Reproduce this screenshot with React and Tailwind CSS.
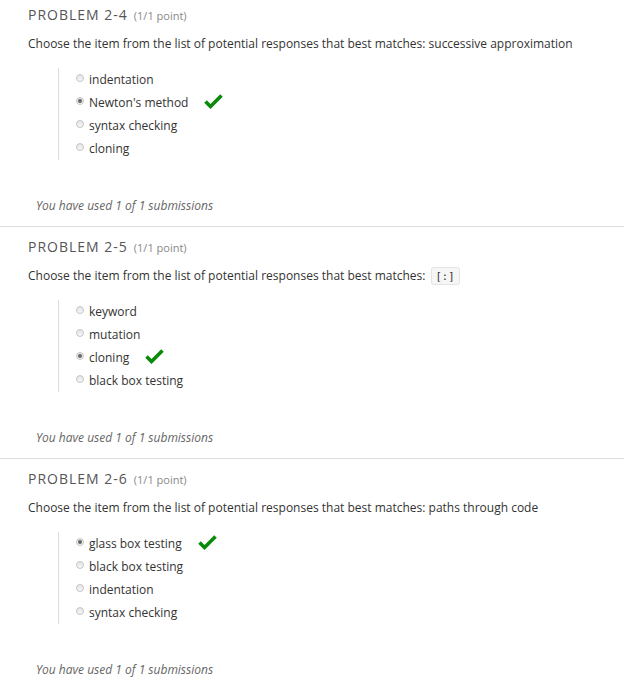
import React from 'react';

const problems = [
  {
    id: '2-4',
    prompt: 'successive approximation',
    options: ['indentation', "Newton's method", 'syntax checking', 'cloning'],
    correct: 1,
  },
  {
    id: '2-5',
    code: '[:]',
    options: ['keyword', 'mutation', 'cloning', 'black box testing'],
    correct: 2,
  },
  {
    id: '2-6',
    prompt: 'paths through code',
    options: ['glass box testing', 'black box testing', 'indentation', 'syntax checking'],
    correct: 0,
  },
];

function Check() {
  return (
    <svg width="19" height="15" viewBox="0 0 19 15" className="ml-[16px] -mt-[2px]">
      <path d="M1.5 7.5 L6.5 12.5 L17.5 1.5" fill="none" stroke="#0a8a0a" strokeWidth="3.6" />
    </svg>
  );
}

function Radio({ checked }) {
  return (
    <span className="w-[8px] h-[8px] rounded-full border border-[#c4c4c4] bg-gradient-to-b from-[#e4e4e4] to-[#f8f8f8] flex items-center justify-center mr-[5px] -mt-[4px]">
      {checked && <span className="w-[4px] h-[4px] rounded-full bg-[#666]" />}
    </span>
  );
}

function Problem({ p, first }) {
  return (
    <section className={first ? 'pt-[6px]' : 'border-t border-[#ddd] pt-[11px]'}>
      <div className="pl-[28px]">
        <h2 className="text-[14px] tracking-[1px] text-[#555] leading-[18px]">
          PROBLEM {p.id}
          <span className="ml-[6px] text-[11px] tracking-normal text-[#888]">(1/1 point)</span>
        </h2>
        <p className="mt-[11px] text-[12px] text-[#333] leading-[16px]">
          Choose the item from the list of potential responses that best matches:{' '}
          {p.code ? (
            <code className="ml-[2px] px-[4px] py-[2px] rounded-[3px] border border-[#e4e4e4] bg-[#f6f6f6] text-[10.5px] font-['DejaVu_Sans_Mono',monospace] text-[#333]">
              {p.code}
            </code>
          ) : (
            p.prompt
          )}
        </p>
        <ul className="mt-[16px] ml-[30px] border-l border-[#ddd] pl-[17px]">
          {p.options.map((o, i) => (
            <li key={o} className="flex items-center h-[23px] text-[12px] text-[#333]">
              <Radio checked={i === p.correct} />
              {o}
              {i === p.correct && <Check />}
            </li>
          ))}
        </ul>
        <p className="mt-[38px] pl-[8px] italic text-[12px] text-[#666] leading-[16px] pb-[12px]">
          You have used 1 of 1 submissions
        </p>
      </div>
    </section>
  );
}

export default function App() {
  return (
    <div className="w-[624px] min-h-[689px] bg-white font-['Open_Sans',sans-serif]">
      {problems.map((p, i) => (
        <Problem key={p.id} p={p} first={i === 0} />
      ))}
    </div>
  );
}
